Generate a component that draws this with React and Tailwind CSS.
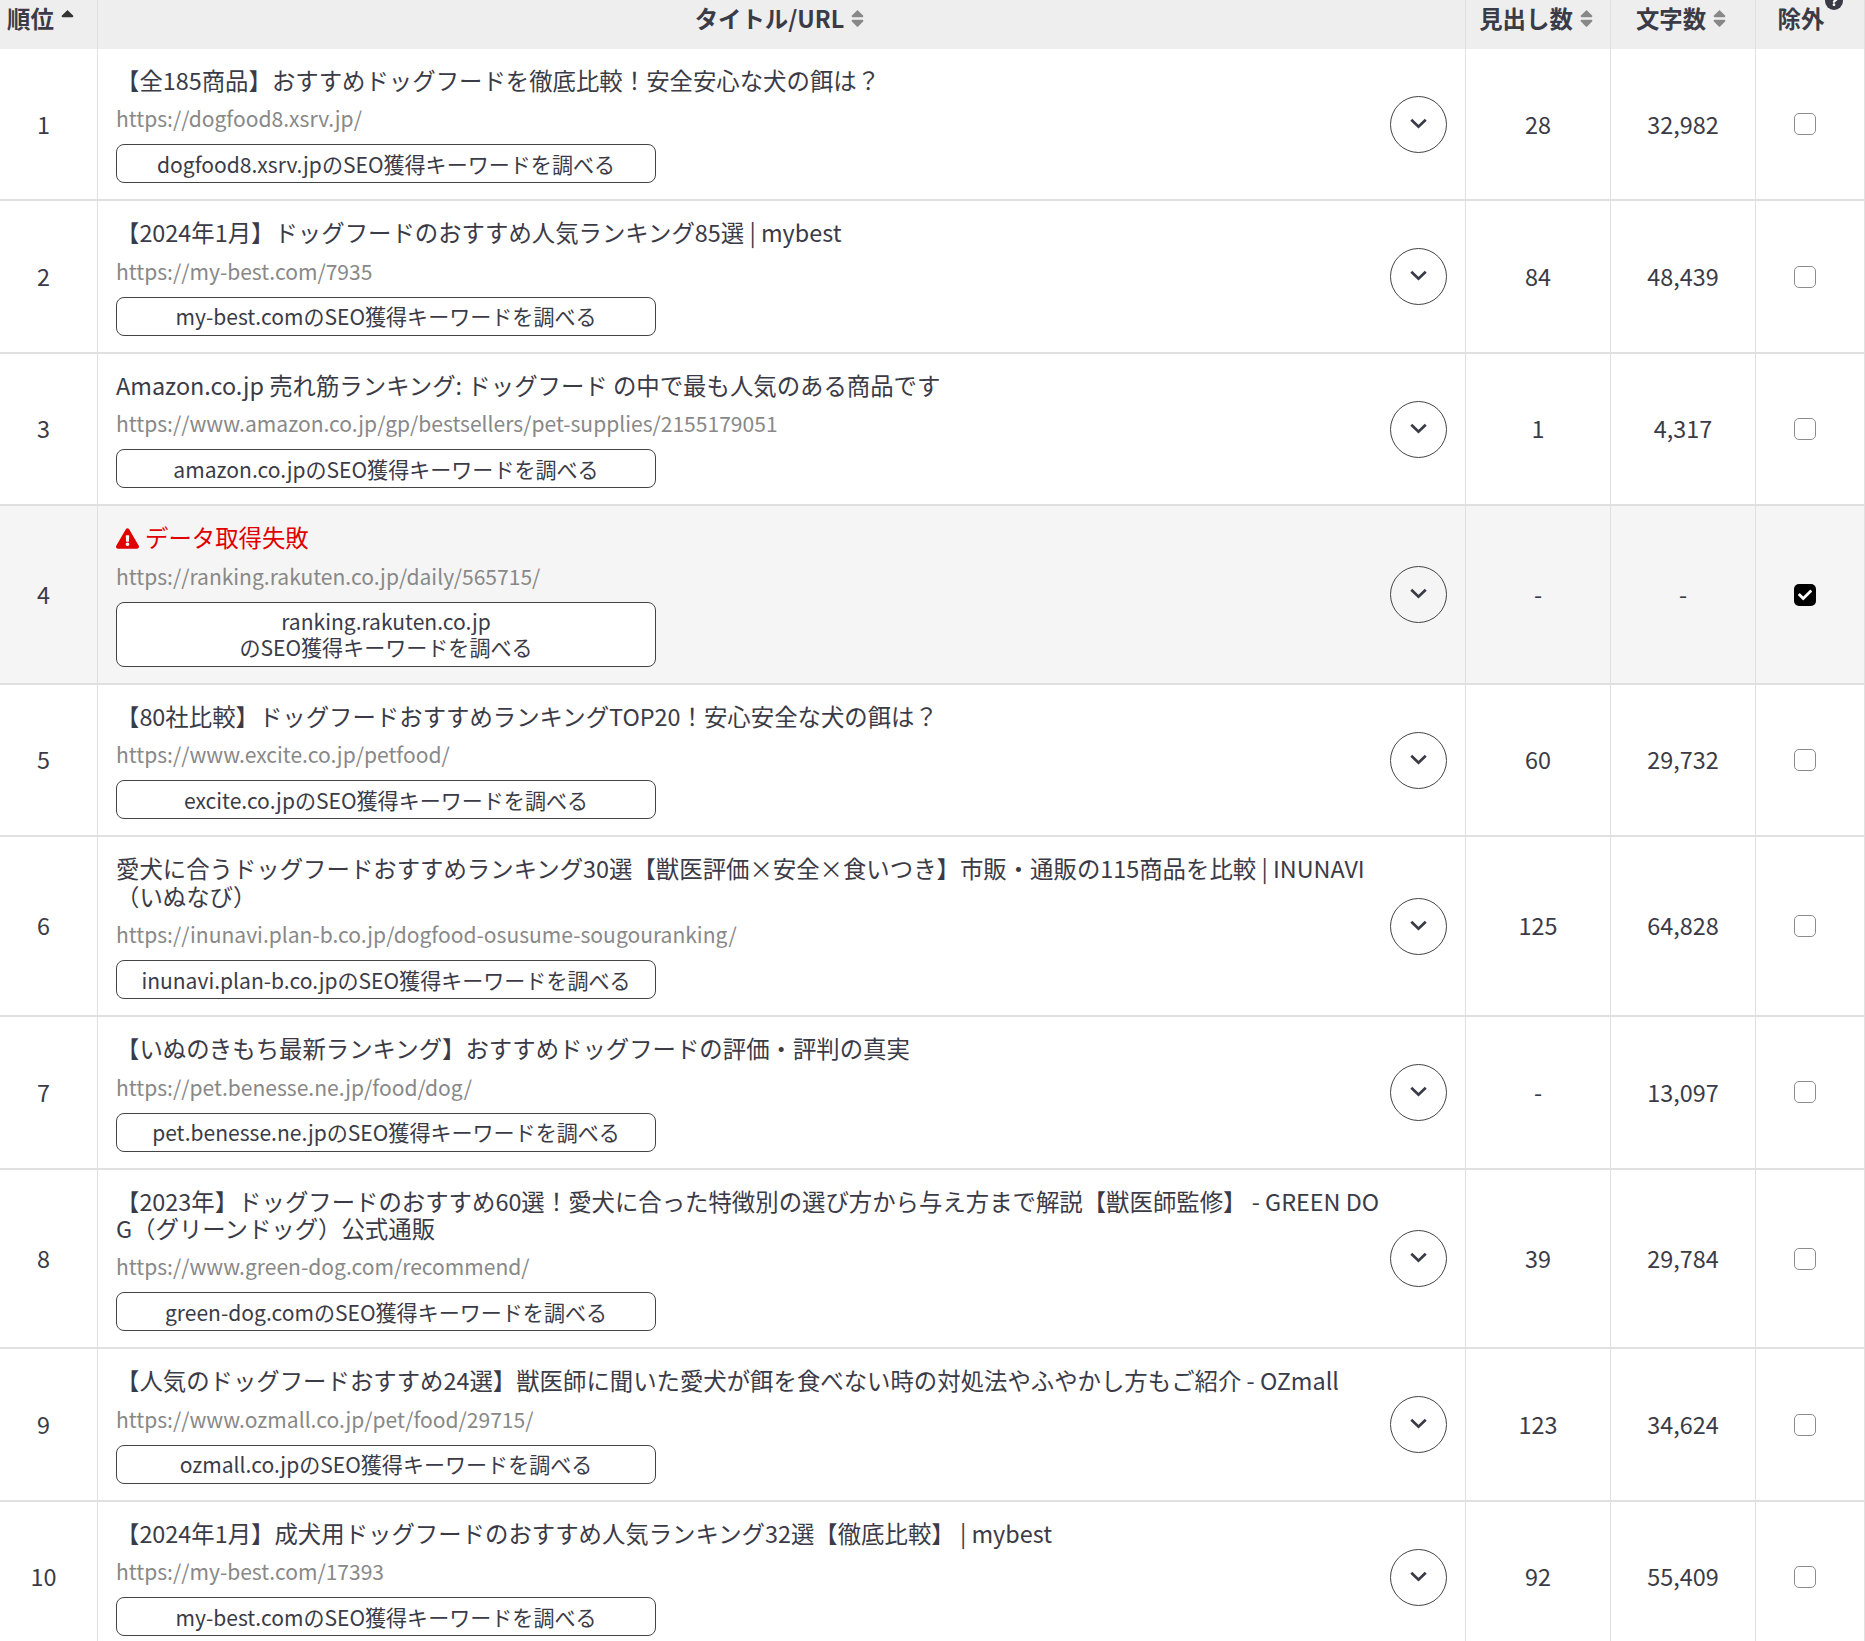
import { FaSort, FaSortUp, FaExclamationTriangle, FaQuestion, FaCheck } from "react-icons/fa";

const rows = [
    { rank: 1, title: "【全185商品】おすすめドッグフードを徹底比較！安全安心な犬の餌は？", url: "https://dogfood8.xsrv.jp/", domain: "dogfood8.xsrv.jp", heads: "28", chars: "32,982" },
    { rank: 2, title: "【2024年1月】ドッグフードのおすすめ人気ランキング85選 | mybest", url: "https://my-best.com/7935", domain: "my-best.com", heads: "84", chars: "48,439" },
    { rank: 3, title: "Amazon.co.jp 売れ筋ランキング: ドッグフード の中で最も人気のある商品です", url: "https://www.amazon.co.jp/gp/bestsellers/pet-supplies/2155179051", domain: "amazon.co.jp", heads: "1", chars: "4,317" },
    { rank: 4, failed: true, url: "https://ranking.rakuten.co.jp/daily/565715/", domain: "ranking.rakuten.co.jp", heads: "-", chars: "-" },
    { rank: 5, title: "【80社比較】ドッグフードおすすめランキングTOP20！安心安全な犬の餌は？", url: "https://www.excite.co.jp/petfood/", domain: "excite.co.jp", heads: "60", chars: "29,732" },
    { rank: 6, title: "愛犬に合うドッグフードおすすめランキング30選【獣医評価×安全×食いつき】市販・通販の115商品を比較 | INUNAVI（いぬなび）", url: "https://inunavi.plan-b.co.jp/dogfood-osusume-sougouranking/", domain: "inunavi.plan-b.co.jp", heads: "125", chars: "64,828" },
    { rank: 7, title: "【いぬのきもち最新ランキング】おすすめドッグフードの評価・評判の真実", url: "https://pet.benesse.ne.jp/food/dog/", domain: "pet.benesse.ne.jp", heads: "-", chars: "13,097" },
    { rank: 8, title: "【2023年】ドッグフードのおすすめ60選！愛犬に合った特徴別の選び方から与え方まで解説【獣医師監修】 - GREEN DOG（グリーンドッグ）公式通販", url: "https://www.green-dog.com/recommend/", domain: "green-dog.com", heads: "39", chars: "29,784" },
    { rank: 9, title: "【人気のドッグフードおすすめ24選】獣医師に聞いた愛犬が餌を食べない時の対処法やふやかし方もご紹介 - OZmall", url: "https://www.ozmall.co.jp/pet/food/29715/", domain: "ozmall.co.jp", heads: "123", chars: "34,624" },
    { rank: 10, title: "【2024年1月】成犬用ドッグフードのおすすめ人気ランキング32選【徹底比較】 | mybest", url: "https://my-best.com/17393", domain: "my-best.com", heads: "92", chars: "55,409" },
];

const SortHead = ({ label, active }) => (
    <span className="inline-flex items-center gap-[3px]">
        {label}
        {active ? <FaSortUp className="text-[21px] text-[#333]" /> : <FaSort className="text-[21px] text-[#888]" />}
    </span>
);

const Row = ({ row }) => {
    const cell = "border-r border-b-2 border-[#e0e0e0] text-center align-middle";
    return (
        <tr className={row.failed ? "bg-[#f5f5f5]" : "bg-white"}>
            <td className={`${cell} pr-[10px]`}>{row.rank}</td>
            <td className="border-r border-b-2 border-[#e0e0e0] pl-[18px] pr-[18px] pt-[18px] pb-[16.05px]">
                <div className="flex items-center">
                    <div className="flex-1 min-w-0">
                        {row.failed ? (
                            <p className="flex items-center gap-[6px] text-[#e00000]">
                                <FaExclamationTriangle className="text-[23px] shrink-0" />
                                データ取得失敗
                            </p>
                        ) : (
                            <p className="break-all">{row.title}</p>
                        )}
                        <p className="mt-[11px] text-[21.06px] leading-[26px] text-[#888]">{row.url}</p>
                        <div className="mt-[13px] w-[540px] rounded-lg border border-[#444] bg-white py-[5.5px] text-center text-[21.06px] leading-[26px]">
                            {row.failed ? (
                                <>
                                    {row.domain}
                                    <br />
                                    のSEO獲得キーワードを調べる
                                </>
                            ) : (
                                `${row.domain}のSEO獲得キーワードを調べる`
                            )}
                        </div>
                    </div>
                    <button type="button" className="mb-[2px] flex h-[57px] w-[57px] shrink-0 items-center justify-center rounded-full border border-[#444]">
                        <svg viewBox="0 0 16 10" className="-mt-[2px] h-[11px] w-[17px]" fill="none" stroke="#3b3b47" strokeWidth="2.6">
                            <path d="M1.2 1.5 8 8 14.8 1.5" />
                        </svg>
                    </button>
                </div>
            </td>
            <td className={cell}>{row.heads}</td>
            <td className={cell}>{row.chars}</td>
            <td className={`${cell} pr-[10px]`}>
                {row.failed ? (
                    <span className="mx-auto flex h-[22px] w-[22px] items-center justify-center rounded-[5px] bg-black text-white">
                        <FaCheck className="text-[14px]" />
                    </span>
                ) : (
                    <span className="mx-auto block h-[22px] w-[22px] rounded-[5px] border border-[#8c8c8c] bg-white" />
                )}
            </td>
        </tr>
    );
};

export default function App() {
    const head = "border-r border-[#e0e0e0] bg-[#eeeeee] pt-[5px] pb-[16.6px] font-bold text-center align-top";
    return (
        <div className="font-['Noto_Sans_CJK_JP','Noto_Sans',sans-serif] text-[23.4px] leading-[27.4px] text-[#3b3b47] overflow-hidden">
            <table className="w-[1865px] table-fixed border-separate border-spacing-0">
                <colgroup>
                    <col className="w-[98px]" />
                    <col className="w-[1368px]" />
                    <col className="w-[145px]" />
                    <col className="w-[145px]" />
                    <col className="w-[109px]" />
                </colgroup>
                <thead>
                    <tr>
                        <th className={`${head} !text-left pl-[7px]`}><SortHead label="順位" active /></th>
                        <th className={head}><SortHead label="タイトル/URL" /></th>
                        <th className={head}><SortHead label="見出し数" /></th>
                        <th className={head}><SortHead label="文字数" /></th>
                        <th className={`${head} relative pr-[18px]`}>
                            除外
                            <span className="absolute right-[21px] top-[-8px] flex h-[18px] w-[18px] items-center justify-center rounded-full bg-[#3b3b47] text-white">
                                <FaQuestion className="text-[10px]" />
                            </span>
                        </th>
                    </tr>
                </thead>
                <tbody>
                    {rows.map((row) => <Row key={row.rank} row={row} />)}
                </tbody>
            </table>
        </div>
    );
}
